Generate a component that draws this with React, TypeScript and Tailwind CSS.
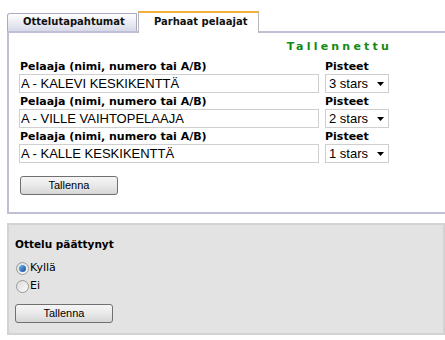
import React from 'react';

const players = [
  { name: 'A - KALEVI KESKIKENTTÄ', stars: '3 stars' },
  { name: 'A - VILLE VAIHTOPELAAJA', stars: '2 stars' },
  { name: 'A - KALLE KESKIKENTTÄ', stars: '1 stars' },
];

function Button({ label }: { label: string }) {
  return (
    <button
      type="button"
      className="block w-[98px] h-[19px] rounded-[3px] border border-[#707070] bg-gradient-to-b from-[#f6f6f6] via-[#e9e9e9] to-[#d6d6d6] text-[11px] leading-none text-black font-['Liberation_Sans',sans-serif]"
    >
      {label}
    </button>
  );
}

function Radio({ checked, label }: { checked?: boolean; label: string }) {
  return (
    <label className="flex items-center h-[14px]">
      <span className="w-[13px] h-[13px] rounded-full border border-[#9a9a9a] bg-gradient-to-br from-[#dcdcdc] to-[#fbfbfb] flex items-center justify-center">
        {checked && (
          <span className="w-[7px] h-[7px] rounded-full bg-gradient-to-br from-[#6fb3f0] to-[#0c4f9c]" />
        )}
      </span>
      <span className="ml-[1px] text-[11px] leading-[14px] text-black font-['DejaVu_Sans',sans-serif]">{label}</span>
    </label>
  );
}

export default function App() {
  return (
    <div className="w-[445px] h-[340px] overflow-hidden bg-white pl-[7px] pt-[11px] font-['DejaVu_Sans',sans-serif]">
      <div className="flex items-end h-[20px]">
        <div className="w-[130px] h-[18px] border border-b-0 border-[#a9abc2] rounded-tl-[3px] bg-gradient-to-b from-white to-[#d7d9e8] text-[10px] font-bold leading-[16px] pl-[15px] text-[#111]">
          Ottelutapahtumat
        </div>
        <div className="relative z-10 ml-[1px] w-[121px] h-[22px] -mb-[2px] border-x border-[#b8b8b8] border-t-2 border-t-[#f2b03c] bg-white text-[10px] font-bold leading-[17px] pl-[15px] text-[#111]">
          Parhaat pelaajat
        </div>
      </div>

      <div className="w-[438px] border-l-2 border-t-2 border-b-2 border-[#bfc0d8] pl-[10px] pt-[7px] pb-[17px]">
        <div className="w-[373px] text-right text-[11px] font-bold leading-[14px] tracking-[3.2px] text-[#148a14]">
          Tallennettu
        </div>
        <div className="mt-[6px] flex flex-col gap-[2px]">
          {players.map((p) => (
            <div key={p.name} className="flex gap-[6px]">
              <div className="w-[300px]">
                <div className="text-[11px] font-bold leading-[14px] pl-[1px] text-black">Pelaaja (nimi, numero tai A/B)</div>
                <input
                  readOnly
                  value={p.name}
                  className="block w-[300px] h-[19px] border border-[#cfcfcf] px-[1px] text-[13px] leading-[17px] text-black font-['Liberation_Sans',sans-serif] outline-none"
                />
              </div>
              <div className="w-[64px]">
                <div className="text-[11px] font-bold leading-[14px] text-black">Pisteet</div>
                <div className="flex items-center justify-between w-[64px] h-[19px] border border-[#cfcfcf] bg-white pl-[3px] pr-[4px] text-[13px] leading-[17px] text-black font-['Liberation_Sans',sans-serif]">
                  <span>{p.stars}</span>
                  <svg width="7" height="4" viewBox="0 0 7 4">
                    <path d="M0 0h7L3.5 4z" fill="#000" />
                  </svg>
                </div>
              </div>
            </div>
          ))}
        </div>
        <div className="mt-[13px] pl-[1px]">
          <Button label="Tallenna" />
        </div>
      </div>

      <div className="mt-[9px] w-[438px] border-2 border-[#d3d3d3] bg-[#e3e3e3] pl-[6px] pt-[12px] pb-[10px]">
        <div className="text-[10.5px] font-bold leading-[14px] text-black">Ottelu päättynyt</div>
        <div className="mt-[10px] flex flex-col gap-[4px] pl-[1px]">
          <Radio checked label="Kyllä" />
          <Radio label="Ei" />
        </div>
        <div className="mt-[11px]">
          <Button label="Tallenna" />
        </div>
      </div>
    </div>
  );
}
